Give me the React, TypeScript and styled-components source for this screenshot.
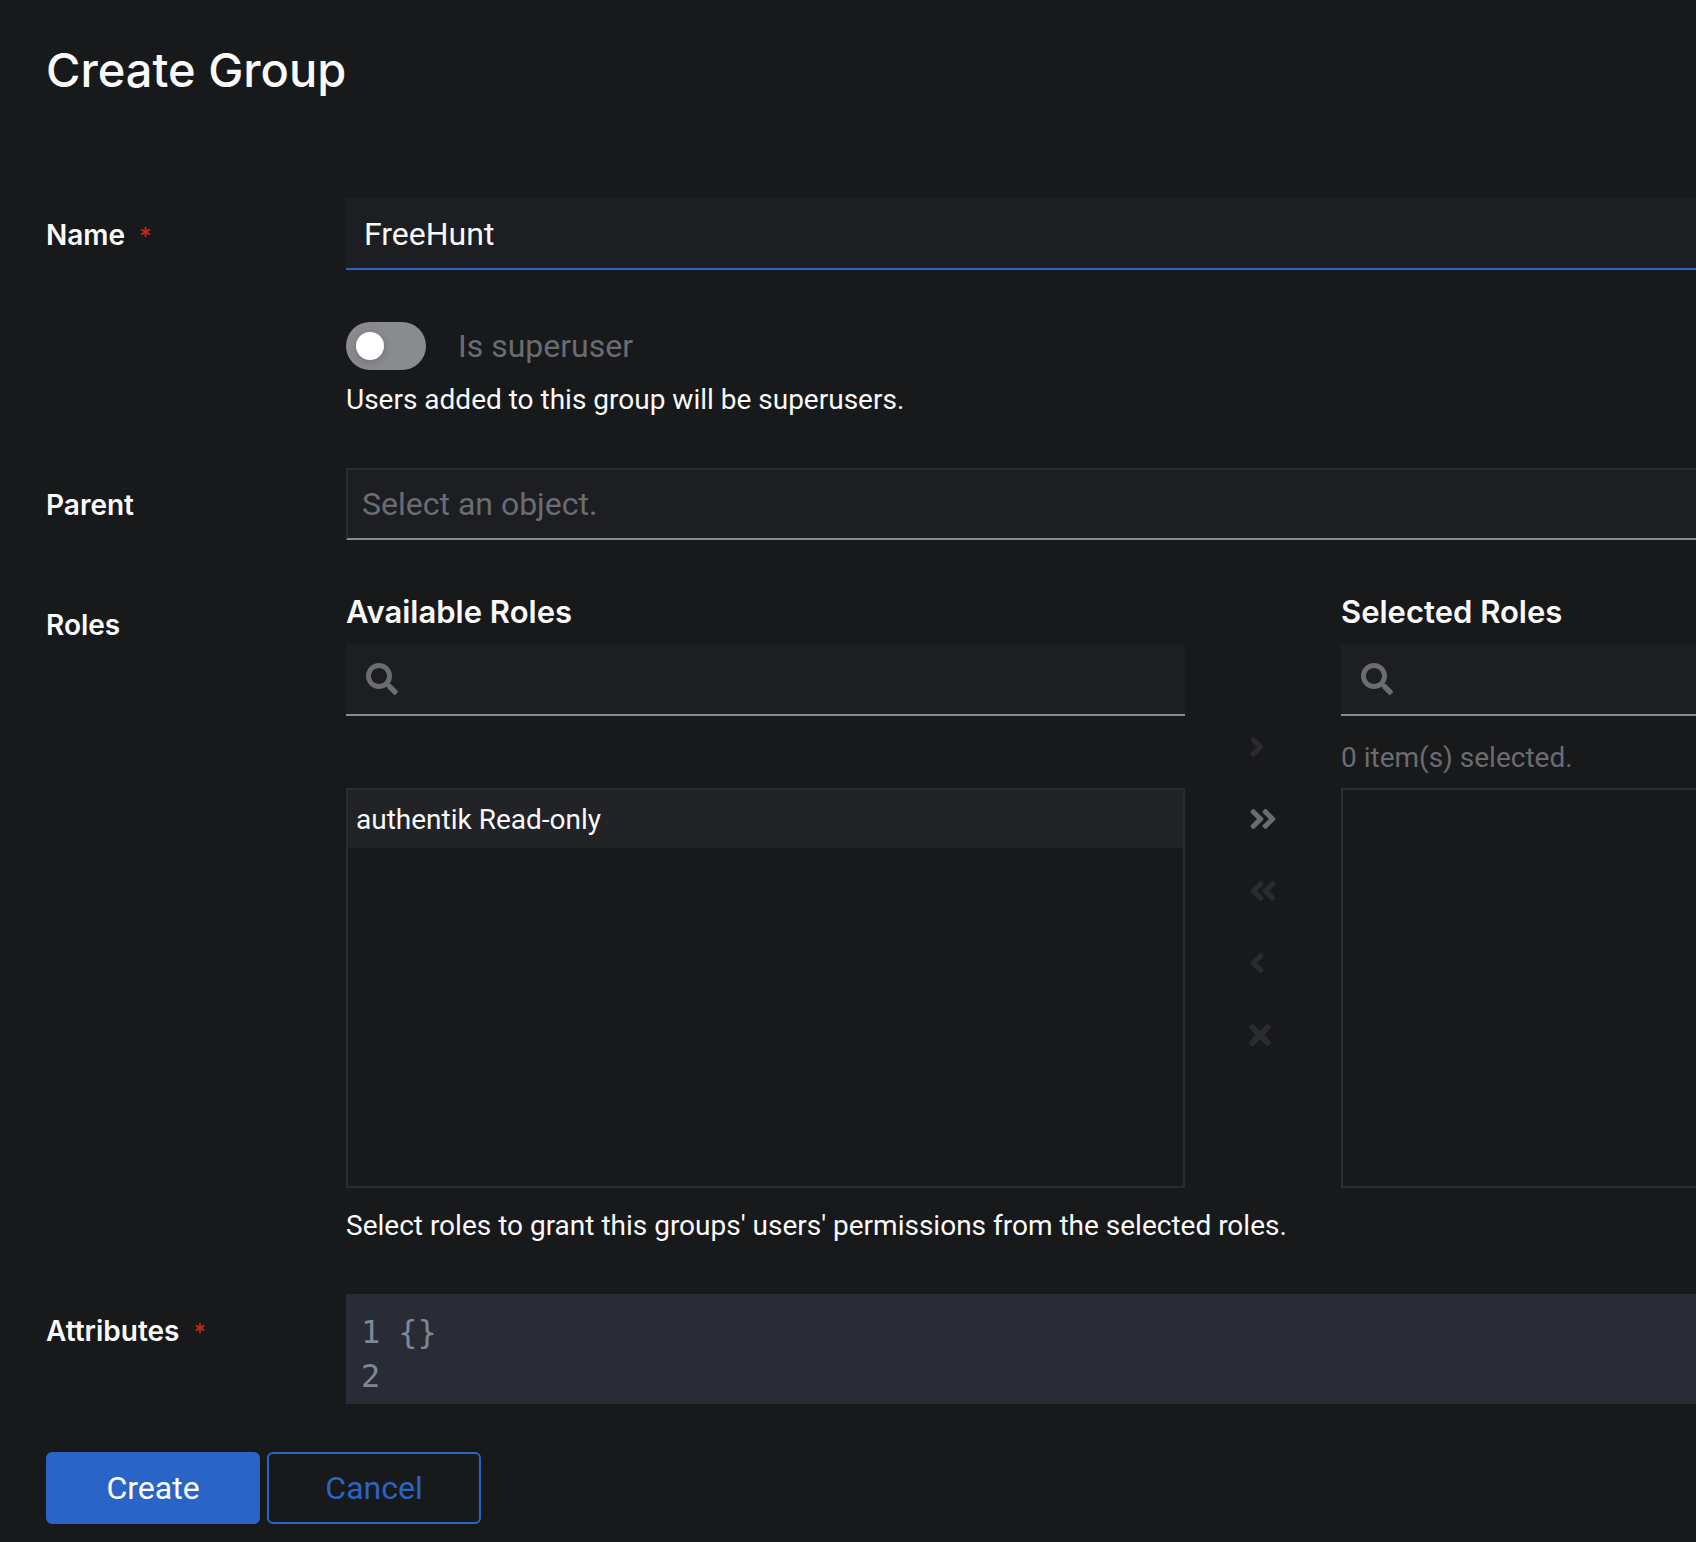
import React, { useState } from "react";
import styled, { createGlobalStyle, css } from "styled-components";

const color = {
  page: "#18191a",
  field: "#1d1e22",
  item: "#222327",
  line: "#2b2c32",
  editor: "#292c34",
  editorText: "#7d8799",
  text: "#fafafa",
  muted: "#6a6c72",
  rule: "#8a8b8e",
  primary: "#2a64c6",
  danger: "#c0291b",
};

const headingFont = `Inter, "Open Sans", sans-serif`;
const bodyFont = `Roboto, "Open Sans", sans-serif`;

const GlobalStyle = createGlobalStyle`
  *, *::before, *::after { box-sizing: border-box; }
  body {
    margin: 0;
    background: ${color.page};
    color: ${color.text};
    font-family: ${bodyFont};
    font-size: 28px;
    line-height: 42px;
  }
  input, textarea, button { font-family: inherit; }
`;

const Page = styled.main`
  min-height: 100vh;
  padding: 38px 0 18px 46px;
`;

const Title = styled.h1`
  margin: 0 0 96px;
  font: 500 47px/64px ${headingFont};
`;

const Form = styled.form`
  display: grid;
  gap: 48px;
`;

const Row = styled.div`
  display: grid;
  grid-template-columns: 300px minmax(0, 1fr);
`;

const LabelCell = styled.div`
  padding-top: 16px;
  font-family: ${headingFont};
  font-weight: 600;
`;

const Required = styled.span`
  margin-left: 14px;
  font-size: 24px;
  font-weight: 500;
  color: ${color.danger};
`;

const Control = styled.div`
  grid-column: 2;
  min-width: 0;
`;

const TextInput = styled.input<{ $variant: "active" | "combo" }>`
  display: block;
  width: 100%;
  height: 72px;
  border: 0;
  border-radius: 0;
  outline: 0;
  background: ${color.field};
  color: ${color.text};
  font-size: 32px;
  ${({ $variant }) =>
    $variant === "active"
      ? css`
          padding: 2px 18px 0;
          border-bottom: 2px solid ${color.primary};
        `
      : css`
          padding: 0 14px;
          border: 2px solid ${color.line};
          border-right: 0;
          border-bottom-color: ${color.rule};
        `}
  &::placeholder {
    color: ${color.muted};
    opacity: 1;
  }
`;

const SwitchLabel = styled.label`
  display: flex;
  align-items: center;
  gap: 32px;
  padding: 4px 0;
  font-size: 32px;
  line-height: 48px;
  color: ${color.muted};
`;

const Switch = styled.input`
  appearance: none;
  flex: none;
  display: flex;
  align-items: center;
  width: 80px;
  height: 48px;
  margin: 0;
  padding: 0 10px;
  border-radius: 24px;
  background: ${color.rule};
  &::before {
    content: "";
    width: 28px;
    height: 28px;
    border-radius: 50%;
    background: #fff;
    box-shadow: 0 2px 8px rgba(0, 0, 0, 0.2);
  }
  &:checked {
    justify-content: flex-end;
    background: ${color.primary};
  }
`;

const Help = styled.p<{ $gap: number }>`
  margin: ${({ $gap }) => $gap}px 0 0;
  line-height: 44px;
  margin-bottom: -2px;
`;

const DualSelect = styled.div`
  display: grid;
  grid-template-columns: minmax(0, 26fr) 156px minmax(0, 11fr);
  padding-top: 6px;
`;

const Pane = styled.section`
  min-width: 0;
`;

const PaneTitle = styled.h2`
  margin: 0 0 14px;
  font: 600 31px/36px ${headingFont};
`;

const SearchBox = styled.label`
  display: flex;
  align-items: center;
  gap: 16px;
  height: 72px;
  padding: 0 20px;
  border-bottom: 2px solid ${color.rule};
  background: ${color.field};
  color: ${color.muted};
`;

const SearchInput = styled.input`
  flex: 1;
  min-width: 0;
  padding: 0;
  border: 0;
  outline: 0;
  background: transparent;
  color: ${color.text};
  font-size: 32px;
`;

const PaneStatus = styled.p`
  height: 72px;
  margin: 0;
  padding-top: 21px;
  color: ${color.muted};
`;

const RoleList = styled.ul<{ $bleed?: boolean }>`
  height: 400px;
  margin: 0;
  padding: 0;
  border: 2px solid ${color.line};
  border-right-width: ${({ $bleed }) => ($bleed ? 0 : 2)}px;
  list-style: none;
`;

const RoleItem = styled.li`
  padding: 9px 8px 7px;
  background: ${color.item};
`;

const Transfer = styled.div`
  display: flex;
  flex-direction: column;
  align-items: center;
  justify-content: flex-end;
  padding: 0 32px 117px;
`;

const TransferButton = styled.button`
  display: flex;
  align-items: center;
  width: 100%;
  height: 72px;
  padding: 0 32px;
  border: 0;
  background: transparent;
  color: ${color.muted};
  &:disabled {
    color: ${color.line};
  }
`;

const Glyph = styled.svg`
  flex: none;
  height: 32px;
  fill: currentColor;
`;

const Editor = styled.div`
  display: flex;
  gap: 18px;
  padding: 16px 0 6px 15px;
  background: ${color.editor};
  color: ${color.editorText};
  font: 32px/44px "DejaVu Sans Mono", monospace;
`;

const Gutter = styled.div`
  white-space: pre;
`;

const Code = styled.textarea`
  flex: 1;
  height: 88px;
  padding: 0;
  border: 0;
  outline: 0;
  resize: none;
  overflow: hidden;
  background: transparent;
  color: inherit;
  && {
    font: inherit;
  }
`;

const Actions = styled.div`
  display: flex;
  gap: 7px;
`;

const Button = styled.button<{ $primary?: boolean }>`
  width: 214px;
  height: 72px;
  border: 2px solid ${color.primary};
  border-radius: 6px;
  background: ${({ $primary }) => ($primary ? color.primary : "transparent")};
  color: ${({ $primary }) => ($primary ? "#fff" : color.primary)};
  font-size: 32px;
`;

const shapes = {
  search: {
    width: 512,
    d: "M505 442.7L405.3 343c-4.5-4.5-10.6-7-17-7H372c27.6-35.3 44-79.7 44-128C416 93.1 322.9 0 208 0S0 93.1 0 208s93.1 208 208 208c48.3 0 92.7-16.4 128-44v16.3c0 6.4 2.5 12.5 7 17l99.7 99.7c9.4 9.4 24.6 9.4 33.9 0l28.3-28.3c9.4-9.4 9.4-24.6.1-34zM208 336c-70.7 0-128-57.2-128-128 0-70.7 57.2-128 128-128 70.7 0 128 57.2 128 128 0 70.7-57.2 128-128 128z",
  },
  right: {
    width: 256,
    d: "M224.3 273l-136 136c-9.4 9.4-24.6 9.4-33.9 0l-22.6-22.6c-9.4-9.4-9.4-24.6 0-33.9l96.4-96.4-96.4-96.4c-9.4-9.4-9.4-24.6 0-33.9L54.3 103c9.4-9.4 24.6-9.4 33.9 0l136 136c9.5 9.4 9.5 24.6.1 34z",
  },
  left: {
    width: 256,
    d: "M31.7 239l136-136c9.4-9.4 24.6-9.4 33.9 0l22.6 22.6c9.4 9.4 9.4 24.6 0 33.9L127.9 256l96.4 96.4c9.4 9.4 9.4 24.6 0 33.9L201.7 409c-9.4 9.4-24.6 9.4-33.9 0l-136-136c-9.5-9.4-9.5-24.6-.1-34z",
  },
  allRight: {
    width: 448,
    d: "M224.3 273l-136 136c-9.4 9.4-24.6 9.4-33.9 0l-22.6-22.6c-9.4-9.4-9.4-24.6 0-33.9l96.4-96.4-96.4-96.4c-9.4-9.4-9.4-24.6 0-33.9L54.3 103c9.4-9.4 24.6-9.4 33.9 0l136 136c9.5 9.4 9.5 24.6.1 34zm192-34l-136-136c-9.4-9.4-24.6-9.4-33.9 0l-22.6 22.6c-9.4 9.4-9.4 24.6 0 33.9l96.4 96.4-96.4 96.4c-9.4 9.4-9.4 24.6 0 33.9l22.6 22.6c9.4 9.4 24.6 9.4 33.9 0l136-136c9.4-9.2 9.4-24.4 0-33.8z",
  },
  allLeft: {
    width: 448,
    d: "M223.7 239l136-136c9.4-9.4 24.6-9.4 33.9 0l22.6 22.6c9.4 9.4 9.4 24.6 0 33.9L319.9 256l96.4 96.4c9.4 9.4 9.4 24.6 0 33.9L393.7 409c-9.4 9.4-24.6 9.4-33.9 0l-136-136c-9.5-9.4-9.5-24.6-.1-34zm-192 34l136 136c9.4 9.4 24.6 9.4 33.9 0l22.6-22.6c9.4-9.4 9.4-24.6 0-33.9L127.9 256l96.4-96.4c9.4-9.4 9.4-24.6 0-33.9L201.7 103c-9.4-9.4-24.6-9.4-33.9 0l-136 136c-9.5 9.4-9.5 24.6-.1 34z",
  },
  clear: {
    width: 352,
    d: "M242.72 256l100.07-100.07c12.28-12.28 12.28-32.19 0-44.48l-22.24-22.24c-12.28-12.28-32.19-12.28-44.48 0L176 189.28 75.93 89.21c-12.28-12.28-32.19-12.28-44.48 0L9.21 111.45c-12.28 12.28-12.28 32.19 0 44.48L109.28 256 9.21 356.07c-12.28 12.28-12.28 32.19 0 44.48l22.24 22.24c12.28 12.28 32.2 12.28 44.48 0L176 322.72l100.07 100.07c12.28 12.28 32.2 12.28 44.48 0l22.24-22.24c12.28-12.28 12.28-32.19 0-44.48L242.72 256z",
  },
};

function Icon({ name }: { name: keyof typeof shapes }) {
  const { width, d } = shapes[name];
  return (
    <Glyph viewBox={`0 0 ${width} 512`} width={width / 16} aria-hidden="true">
      <path d={d} />
    </Glyph>
  );
}

const transfers: { icon: keyof typeof shapes; label: string; enabled?: boolean }[] = [
  { icon: "right", label: "Add selected" },
  { icon: "allRight", label: "Add all", enabled: true },
  { icon: "allLeft", label: "Remove all" },
  { icon: "left", label: "Remove selected" },
  { icon: "clear", label: "Clear" },
];

export default function App() {
  const [name, setName] = useState("FreeHunt");
  const [attributes, setAttributes] = useState("{}\n");

  return (
    <Page>
      <GlobalStyle />
      <Title>Create Group</Title>
      <Form onSubmit={(event) => event.preventDefault()}>
        <Row>
          <LabelCell>
            <label htmlFor="name">Name</label>
            <Required>*</Required>
          </LabelCell>
          <Control>
            <TextInput
              id="name"
              $variant="active"
              required
              value={name}
              onChange={(event) => setName(event.target.value)}
            />
          </Control>
        </Row>
        <Row>
          <Control>
            <SwitchLabel>
              <Switch type="checkbox" />
              Is superuser
            </SwitchLabel>
            <Help $gap={4}>Users added to this group will be superusers.</Help>
          </Control>
        </Row>
        <Row>
          <LabelCell>
            <label htmlFor="parent">Parent</label>
          </LabelCell>
          <Control>
            <TextInput id="parent" $variant="combo" placeholder="Select an object." />
          </Control>
        </Row>
        <Row>
          <LabelCell id="roles">Roles</LabelCell>
          <Control role="group" aria-labelledby="roles">
            <DualSelect>
              <Pane>
                <PaneTitle id="available">Available Roles</PaneTitle>
                <SearchBox>
                  <Icon name="search" />
                  <SearchInput aria-label="Search available roles" />
                </SearchBox>
                <PaneStatus />
                <RoleList role="listbox" aria-labelledby="available">
                  <RoleItem role="option">authentik Read-only</RoleItem>
                </RoleList>
              </Pane>
              <Transfer>
                {transfers.map(({ icon, label, enabled }) => (
                  <TransferButton key={icon} type="button" aria-label={label} disabled={!enabled}>
                    <Icon name={icon} />
                  </TransferButton>
                ))}
              </Transfer>
              <Pane>
                <PaneTitle id="selected">Selected Roles</PaneTitle>
                <SearchBox>
                  <Icon name="search" />
                  <SearchInput aria-label="Search selected roles" />
                </SearchBox>
                <PaneStatus>0 item(s) selected.</PaneStatus>
                <RoleList $bleed role="listbox" aria-labelledby="selected" />
              </Pane>
            </DualSelect>
            <Help $gap={16}>
              Select roles to grant this groups' users' permissions from the selected roles.
            </Help>
          </Control>
        </Row>
        <Row>
          <LabelCell>
            <label htmlFor="attributes">Attributes</label>
            <Required>*</Required>
          </LabelCell>
          <Control>
            <Editor>
              <Gutter aria-hidden="true">{"1\n2"}</Gutter>
              <Code
                id="attributes"
                spellCheck={false}
                value={attributes}
                onChange={(event) => setAttributes(event.target.value)}
              />
            </Editor>
          </Control>
        </Row>
        <Actions>
          <Button $primary type="submit">
            Create
          </Button>
          <Button type="button">Cancel</Button>
        </Actions>
      </Form>
    </Page>
  );
}
